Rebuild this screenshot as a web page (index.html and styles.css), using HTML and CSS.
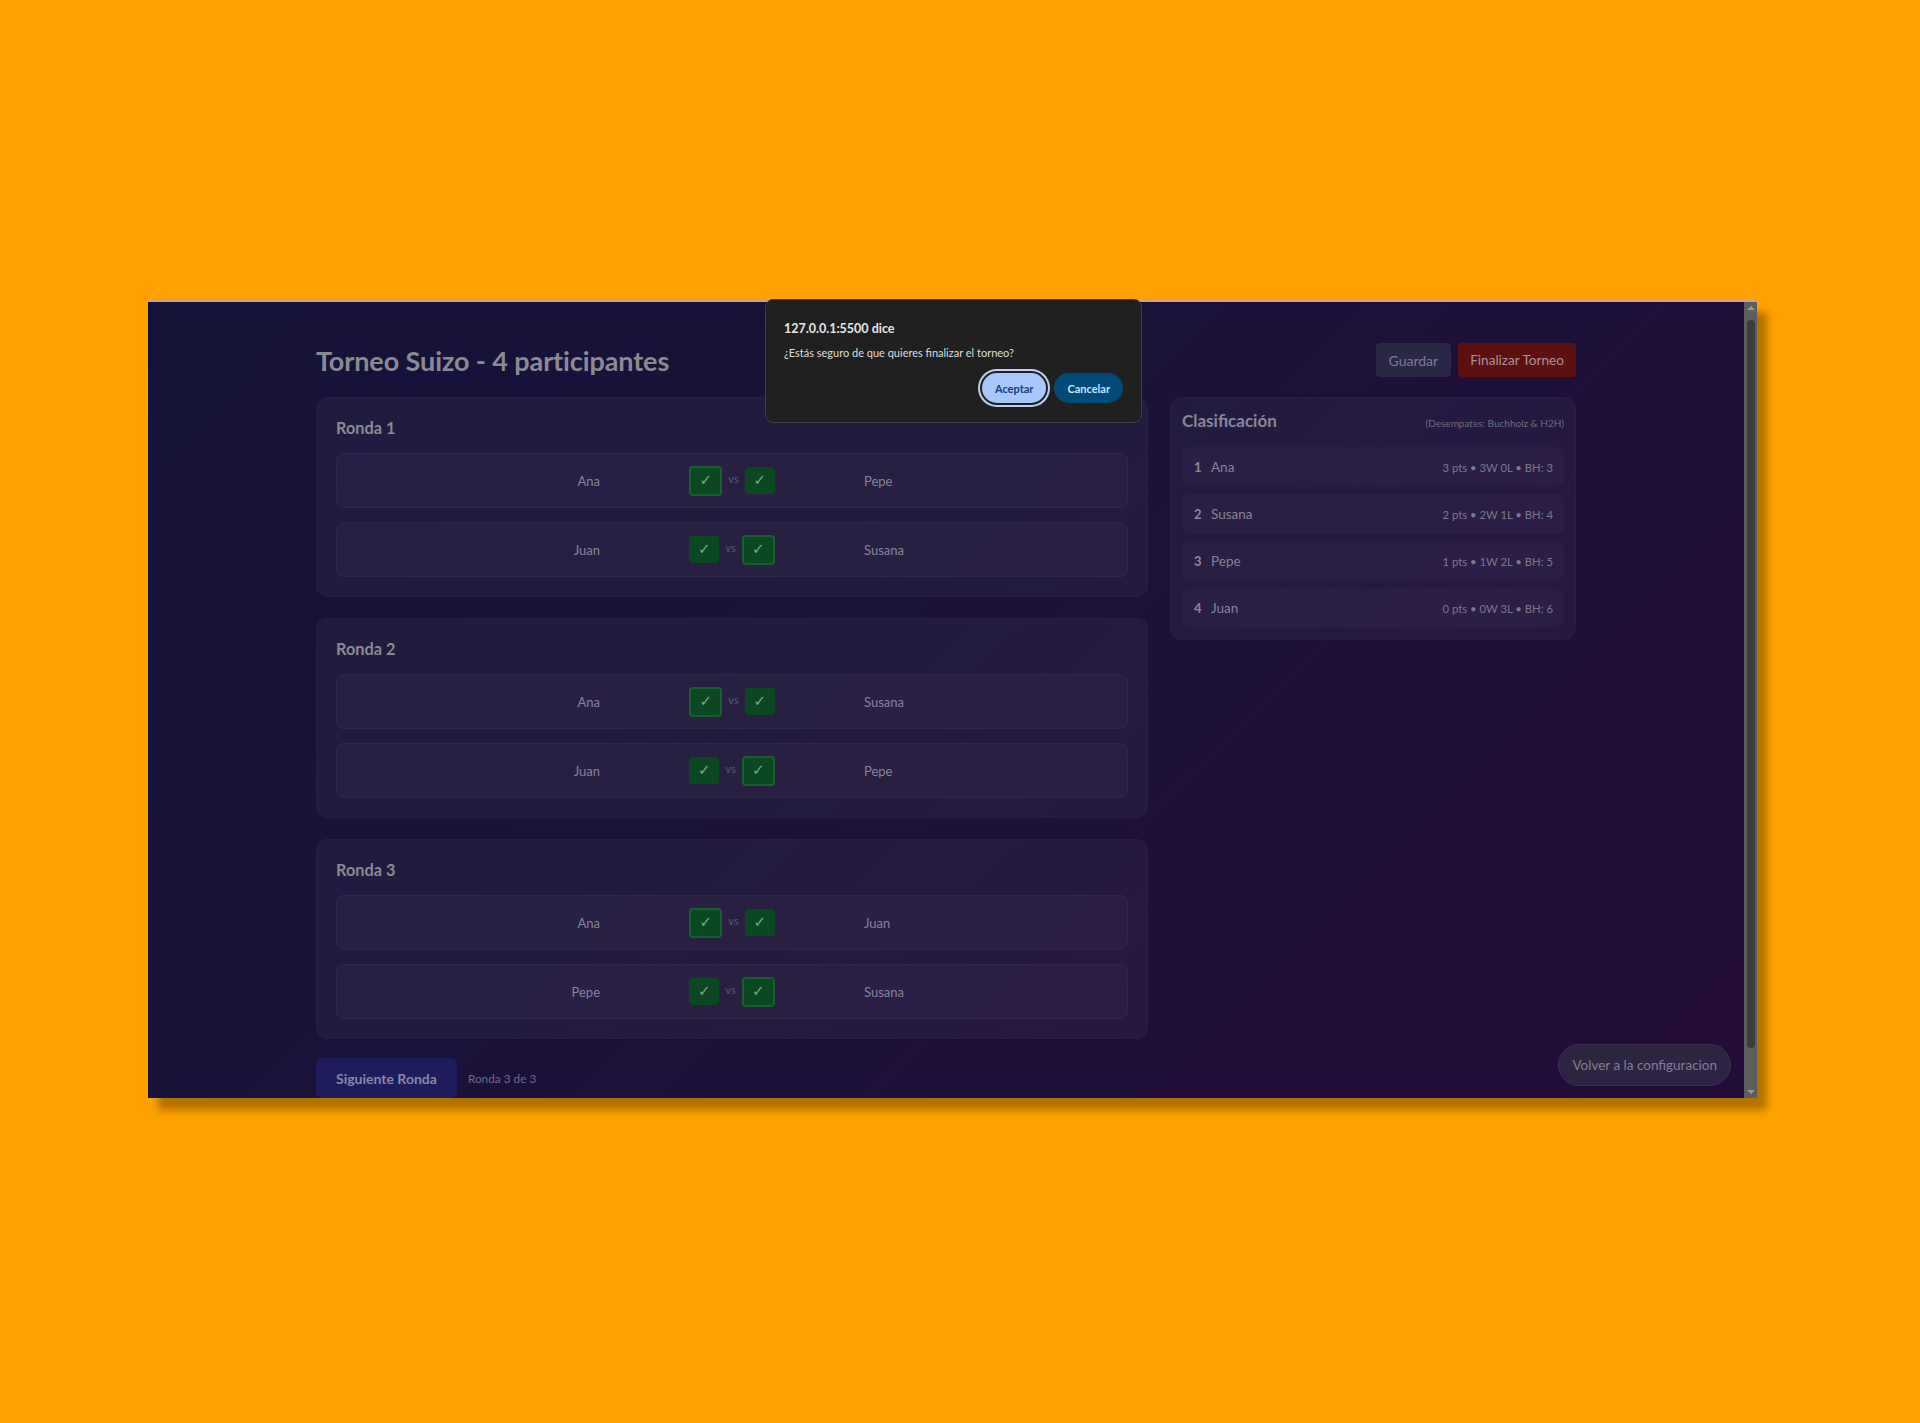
FILE: index.html
```html
<!DOCTYPE html>
<html lang="es">
<head>
<meta charset="utf-8">
<title>Torneo Suizo</title>
<link rel="stylesheet" href="styles.css">
</head>
<body>
<div class="stage">
  <div class="window">
    <div class="viewport">
      <main class="app">
        <header class="top">
          <h1 class="title">Torneo Suizo - 4 participantes</h1>
          <div class="actions">
            <button class="btn btn-save">Guardar</button>
            <button class="btn btn-end">Finalizar Torneo</button>
          </div>
        </header>
        <div class="layout">
          <section class="rounds">
            <div class="round">
              <h2 class="round-title">Ronda 1</h2>
              <div class="matches">
                <div class="match">
                  <span class="name name-left">Ana</span>
                  <div class="score"><span class="chk win">✓</span><span class="vs">vs</span><span class="chk">✓</span></div>
                  <span class="name name-right">Pepe</span>
                </div>
                <div class="match">
                  <span class="name name-left">Juan</span>
                  <div class="score"><span class="chk">✓</span><span class="vs">vs</span><span class="chk win">✓</span></div>
                  <span class="name name-right">Susana</span>
                </div>
              </div>
            </div>
            <div class="round">
              <h2 class="round-title">Ronda 2</h2>
              <div class="matches">
                <div class="match">
                  <span class="name name-left">Ana</span>
                  <div class="score"><span class="chk win">✓</span><span class="vs">vs</span><span class="chk">✓</span></div>
                  <span class="name name-right">Susana</span>
                </div>
                <div class="match">
                  <span class="name name-left">Juan</span>
                  <div class="score"><span class="chk">✓</span><span class="vs">vs</span><span class="chk win">✓</span></div>
                  <span class="name name-right">Pepe</span>
                </div>
              </div>
            </div>
            <div class="round">
              <h2 class="round-title">Ronda 3</h2>
              <div class="matches">
                <div class="match">
                  <span class="name name-left">Ana</span>
                  <div class="score"><span class="chk win">✓</span><span class="vs">vs</span><span class="chk">✓</span></div>
                  <span class="name name-right">Juan</span>
                </div>
                <div class="match">
                  <span class="name name-left">Pepe</span>
                  <div class="score"><span class="chk">✓</span><span class="vs">vs</span><span class="chk win">✓</span></div>
                  <span class="name name-right">Susana</span>
                </div>
              </div>
            </div>
            <div class="round-footer">
              <button class="btn-next">Siguiente Ronda</button>
              <span class="round-count">Ronda 3 de 3</span>
            </div>
          </section>
          <aside class="standings">
            <div class="standings-head">
              <h2 class="standings-title">Clasificación</h2>
              <span class="tiebreak">(Desempates: Buchholz &amp; H2H)</span>
            </div>
            <ol class="table">
              <li class="row"><span class="pos">1</span><span class="player">Ana</span><span class="stats">3 pts • 3W 0L • BH: 3</span></li>
              <li class="row"><span class="pos">2</span><span class="player">Susana</span><span class="stats">2 pts • 2W 1L • BH: 4</span></li>
              <li class="row"><span class="pos">3</span><span class="player">Pepe</span><span class="stats">1 pts • 1W 2L • BH: 5</span></li>
              <li class="row"><span class="pos">4</span><span class="player">Juan</span><span class="stats">0 pts • 0W 3L • BH: 6</span></li>
            </ol>
          </aside>
        </div>
      </main>
      <button class="btn-back">Volver a la configuracion</button>
    </div>
    <div class="scrollbar">
      <span class="arrow arrow-up"></span>
      <span class="thumb"></span>
      <span class="arrow arrow-down"></span>
    </div>
    <div class="dialog" role="dialog">
      <p class="dialog-title">127.0.0.1:5500 dice</p>
      <p class="dialog-msg">¿Estás seguro de que quieres finalizar el torneo?</p>
      <div class="dialog-actions">
        <button class="dbtn dbtn-ok">Aceptar</button>
        <button class="dbtn dbtn-cancel">Cancelar</button>
      </div>
    </div>
  </div>
</div>
</body>
</html>
```

FILE: styles.css
```css
* { box-sizing: border-box; margin: 0; padding: 0; }
html, body { width: 1920px; height: 1423px; overflow: hidden; }
body {
  background: #ffa200;
  font-family: Lato, "Liberation Sans", sans-serif;
}
button { font-family: inherit; border: 0; cursor: pointer; }

.stage { padding: 300px 0 0 148px; }

.window {
  position: relative;
  width: 1609px;
  height: 798px;
  display: flex;
  border-top: 2px solid #d09e95;
  box-shadow: 10px 12px 8px rgba(0, 0, 0, 0.3);
}

.viewport {
  position: relative;
  width: 1596px;
  height: 796px;
  overflow: hidden;
  background: linear-gradient(135deg, #15123a 0%, #1b1238 45%, #240c39 100%);
}

.app {
  width: 1260px;
  margin: 0 auto;
  padding-top: 41px;
}

.top {
  display: flex;
  align-items: center;
  justify-content: space-between;
  height: 34px;
  margin-bottom: 20px;
}
.title {
  font-size: 27px;
  font-weight: 700;
  color: #8a8a93;
  letter-spacing: -0.1px;
  margin-top: 1px;
}
.actions { display: flex; gap: 7px; }
.btn {
  height: 34px;
  padding: 0 13px;
  border-radius: 4px;
  font-size: 14px;
}
.btn-save { background: #2a2646; color: #7f7d8e; }
.btn-end { background: #5c1010; color: #a7949a; padding: 0 12px; font-size: 13.6px; }

.layout {
  display: grid;
  grid-template-columns: 1fr 406px;
  gap: 22px;
  align-items: start;
}

.round {
  background: rgba(255, 255, 255, 0.04);
  border: 1px solid rgba(255, 255, 255, 0.02);
  border-radius: 12px;
  padding: 19px 19px 19px;
  margin-bottom: 21px;
}
.round-title {
  font-size: 16.3px;
  font-weight: 700;
  line-height: 22px;
  color: #8a8a92;
  margin-bottom: 14px;
}
.matches { display: flex; flex-direction: column; gap: 14px; }
.match {
  display: grid;
  grid-template-columns: 1fr 264px 1fr;
  align-items: center;
  height: 55px;
  border-radius: 8px;
  background: rgba(255, 255, 255, 0.025);
  border: 1px solid rgba(255, 255, 255, 0.04);
}
.name { font-size: 13px; color: #86849a; }
.name-left { text-align: right; }
.name-right { text-align: left; }
.score {
  display: flex;
  align-items: center;
  justify-content: center;
  gap: 6px;
}
.chk {
  display: flex;
  align-items: center;
  justify-content: center;
  width: 30px;
  height: 27px;
  border-radius: 4px;
  background: #0a4821;
  color: #82a28c;
  font-family: "DejaVu Sans", sans-serif;
  font-size: 15px;
  line-height: 1;
}
.chk.win {
  width: 33px;
  height: 30px;
  border: 2px solid #175f30;
}
.vs { font-size: 11px; color: #5a5772; margin-top: -4px; }

.round-footer {
  display: flex;
  align-items: center;
  gap: 11px;
  margin-top: -2px;
}
.btn-next {
  height: 40px;
  padding: 0 20px;
  border-radius: 6px;
  background: #1f1c5c;
  color: #8987a8;
  font-size: 14px;
  font-weight: 700;
}
.round-count { font-size: 11.8px; color: #6f6b80; }

.standings {
  background: rgba(255, 255, 255, 0.04);
  border: 1px solid rgba(255, 255, 255, 0.02);
  border-radius: 12px;
  padding: 11px 11px 11px;
}
.standings-head {
  display: flex;
  align-items: baseline;
  justify-content: space-between;
  margin-bottom: 14px;
}
.standings-title {
  font-size: 17px;
  font-weight: 700;
  line-height: 24px;
  color: #87879a;
}
.tiebreak { font-size: 10px; color: #6e6a80; }
.table { list-style: none; display: flex; flex-direction: column; gap: 7px; }
.row {
  display: flex;
  align-items: center;
  height: 40px;
  padding: 0 11px 0 12px;
  border-radius: 8px;
  background: rgba(255, 255, 255, 0.025);
}
.pos { font-size: 13px; font-weight: 700; color: #8a8a96; width: 17px; }
.player { font-size: 13.5px; color: #858397; flex: 1; }
.stats { font-size: 11.3px; color: #7a788c; }

.btn-back {
  position: absolute;
  right: 13px;
  bottom: 12px;
  height: 42px;
  padding: 0 13px;
  border-radius: 21px;
  background: #2d2442;
  border: 1px solid #3a3050;
  color: #847e92;
  font-size: 13.5px;
}

.scrollbar {
  width: 13px;
  height: 796px;
  background: #5d5d5d;
  display: flex;
  flex-direction: column;
  align-items: center;
  padding: 4px 0;
}
.arrow { width: 0; height: 0; border-left: 4px solid transparent; border-right: 4px solid transparent; }
.arrow-up { border-bottom: 4px solid #9a9a9a; }
.arrow-down { border-top: 4px solid #9a9a9a; }
.thumb {
  width: 8px;
  flex: 1;
  margin: 10px 0 42px;
  border-radius: 4px;
  background: #3d3d3d;
}

.dialog {
  position: absolute;
  left: 617px;
  top: -3px;
  width: 377px;
  height: 124px;
  padding: 21px 18px 0 18px;
  background: #202020;
  border: 1px solid #3f3f3f;
  border-radius: 8px;
  color: #e6e6e6;
}
.dialog-title { font-size: 12.5px; font-weight: 700; line-height: 16px; }
.dialog-msg { font-size: 11px; line-height: 16px; margin-top: 8px; color: #dedede; }
.dialog-actions {
  display: flex;
  justify-content: flex-end;
  gap: 8px;
  margin-top: 12px;
}
.dbtn {
  height: 30px;
  padding: 0 13px;
  border-radius: 15px;
  font-size: 11px;
  font-weight: 700;
}
.dbtn-ok {
  background: #a8c7fa;
  color: #123f82;
  box-shadow: 0 0 0 2px #202020, 0 0 0 4px #bcd0f2;
}
.dbtn-cancel { background: #004a77; color: #c2e7ff; }
```
